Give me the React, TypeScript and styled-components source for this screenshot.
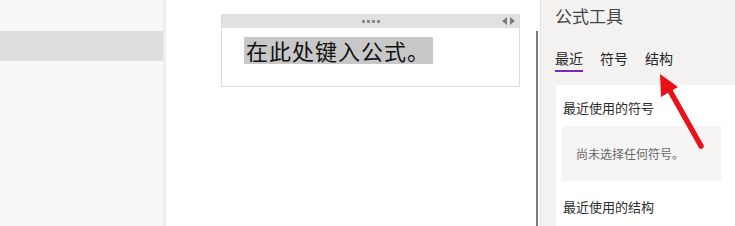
import styled, { createGlobalStyle } from "styled-components";

const GlobalStyle = createGlobalStyle`
  html, body {
    margin: 0;
    padding: 0;
    background: #ffffff;
  }
  body {
    font-family: "Noto Sans CJK SC", "Noto Sans", sans-serif;
    overflow: hidden;
  }
`;

const Page = styled.div`
  display: flex;
  width: 735px;
  height: 226px;
  overflow: hidden;
`;

const Sidebar = styled.div`
  width: 163px;
  flex-shrink: 0;
  background: #f9f8f7;
  border-right: 3px solid #efeeed;
  padding-top: 31px;
  box-sizing: content-box;
`;

const SidebarRow = styled.div<{ $active?: boolean }>`
  height: 30px;
  background: ${(p) => (p.$active ? "#dfdedd" : "transparent")};
`;

const Canvas = styled.div`
  flex: 1;
  display: flex;
  justify-content: space-between;
  background: #ffffff;
  padding: 14px 0 0 55px;
`;

const EquationBox = styled.div`
  width: 297px;
  height: 72px;
  border: 1px solid #dcdcdc;
  border-top: none;
  display: flex;
  flex-direction: column;
`;

const EquationHandle = styled.div`
  height: 14px;
  background: #e1e1e1;
  display: flex;
  align-items: center;
  justify-content: center;
  position: relative;
`;

const Dots = styled.div`
  display: flex;
  gap: 2px;
  span {
    width: 3px;
    height: 3px;
    background: #8a8a8a;
  }
`;

const Arrows = styled.div`
  position: absolute;
  right: 4px;
  top: 3px;
  display: flex;
  gap: 3px;
`;

const EquationBody = styled.div`
  padding: 9px 0 0 22px;
`;

const Placeholder = styled.span`
  display: inline-block;
  background: #c8c8c8;
  color: #111111;
  font-family: "Noto Sans CJK SC", sans-serif;
  font-weight: 400;
  font-size: 22px;
  line-height: 27px;
  height: 27px;
  padding: 0 3px 0 2px;
  letter-spacing: 1px;
`;

const ScrollTrack = styled.div`
  width: 3px;
  margin-top: 17px;
  display: flex;
  flex-direction: column;
  justify-content: flex-end;
  margin-right: 1px;
`;

const ScrollThumb = styled.div`
  width: 2px;
  height: 195px;
  background: #7a7a7a;
`;

const ToolPane = styled.div`
  width: 194px;
  flex-shrink: 0;
  background: #f3f2f1;
  border-left: 1px solid #e3e2e1;
  position: relative;
  display: flex;
  flex-direction: column;
`;

const PaneTitle = styled.div`
  font-size: 17px;
  color: #454545;
  padding: 4px 0 0 14px;
  line-height: 24px;
`;

const Tabs = styled.div`
  display: flex;
  gap: 17px;
  padding: 20px 0 0 14px;
`;

const Tab = styled.div<{ $active?: boolean }>`
  font-size: 14px;
  line-height: 20px;
  color: #262626;
  padding-bottom: 2px;
  border-bottom: 2px solid ${(p) => (p.$active ? "#7a28b8" : "transparent")};
`;

const Card = styled.div`
  margin: 13px 0 0 15px;
  background: #ffffff;
  flex: 1;
  padding: 14px 0 0 7px;
`;

const SectionTitle = styled.div`
  font-size: 13px;
  line-height: 18px;
  color: #2b2b2b;
`;

const EmptyBox = styled.div`
  margin: 9px 14px 0 -1px;
  height: 55px;
  background: #f6f5f4;
  display: flex;
  align-items: center;
  padding-left: 14px;
  font-size: 12px;
  color: #666666;
`;

const NextSection = styled(SectionTitle)`
  margin-top: 17px;
`;

const Pointer = styled.svg`
  position: absolute;
  left: 100px;
  top: 66px;
  pointer-events: none;
`;

export default function App() {
  return (
    <>
      <GlobalStyle />
      <Page>
        <Sidebar>
          <SidebarRow $active />
        </Sidebar>
        <Canvas>
          <EquationBox>
            <EquationHandle>
              <Dots>
                <span />
                <span />
                <span />
                <span />
              </Dots>
              <Arrows>
                <svg width="5" height="8" viewBox="0 0 5 8">
                  <path d="M5 0 L0 4 L5 8 Z" fill="#7d7d7d" />
                </svg>
                <svg width="5" height="8" viewBox="0 0 5 8">
                  <path d="M0 0 L5 4 L0 8 Z" fill="#7d7d7d" />
                </svg>
              </Arrows>
            </EquationHandle>
            <EquationBody>
              <Placeholder>在此处键入公式。</Placeholder>
            </EquationBody>
          </EquationBox>
          <ScrollTrack>
            <ScrollThumb />
          </ScrollTrack>
        </Canvas>
        <ToolPane>
          <PaneTitle>公式工具</PaneTitle>
          <Tabs>
            <Tab $active>最近</Tab>
            <Tab>符号</Tab>
            <Tab>结构</Tab>
          </Tabs>
          <Card>
            <SectionTitle>最近使用的符号</SectionTitle>
            <EmptyBox>尚未选择任何符号。</EmptyBox>
            <NextSection>最近使用的结构</NextSection>
          </Card>
          <Pointer width="80" height="90" viewBox="0 0 80 90">
            <line x1="60" y1="80" x2="28" y2="23" stroke="#e8121a" strokeWidth="5.5" strokeLinecap="round" />
            <path d="M19 8 L37 21 L20 31 Z" fill="#e8121a" />
          </Pointer>
        </ToolPane>
      </Page>
    </>
  );
}
